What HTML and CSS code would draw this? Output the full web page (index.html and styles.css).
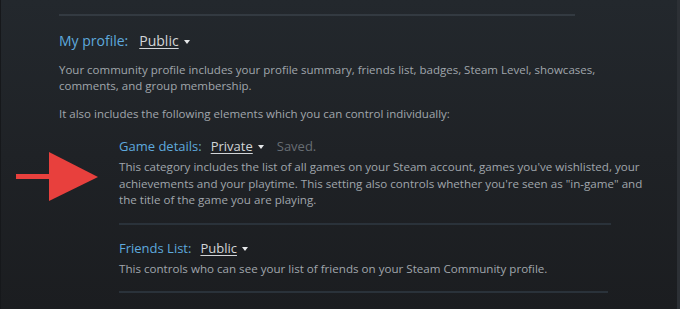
FILE: index.html
```html
<!DOCTYPE html>
<html>
<head>
<meta charset="utf-8">
<link rel="stylesheet" href="styles.css">
</head>
<body>
<div class="page">
  <div class="rule top-rule"></div>
  <section class="profile">
    <h2 class="setting-title big"><span class="label">My profile:</span><span class="value">Public</span><span class="caret"></span></h2>
    <p class="desc first">Your community profile includes your profile summary, friends list, badges, Steam Level, showcases, comments, and group membership.</p>
    <p class="desc second">It also includes the following elements which you can control individually:</p>
    <div class="sub">
      <div class="item">
        <h3 class="setting-title"><span class="label">Game details:</span><span class="value">Private</span><span class="caret"></span><span class="saved">Saved.</span></h3>
        <p class="desc small">This category includes the list of all games on your Steam account, games you've wishlisted, your achievements and your playtime. This setting also controls whether you're seen as "in&#8209;game" and the title of the game you are playing.</p>
      </div>
      <div class="rule sub-rule"></div>
      <div class="item">
        <h3 class="setting-title"><span class="label">Friends List:</span><span class="value">Public</span><span class="caret"></span></h3>
        <p class="desc small">This controls who can see your list of friends on your Steam Community profile.</p>
      </div>
      <div class="rule sub-rule last"></div>
    </div>
  </section>
  <svg class="arrow" width="90" height="52" viewBox="0 0 90 52">
    <rect x="0" y="23" width="36" height="5" fill="#e8403d"/>
    <polygon points="33,1 82,26 33,50" fill="#e8403d"/>
  </svg>
</div>
</body>
</html>
```
FILE: styles.css
```css
* { box-sizing: border-box; }
html, body { margin: 0; padding: 0; }
body {
  width: 680px;
  height: 309px;
  overflow: hidden;
  font-family: "Open Sans", "Noto Sans", sans-serif;
  background: linear-gradient(180deg, #23282d 0%, #1f2226 50%, #1b1d20 100%);
}
.page {
  position: relative;
  height: 309px;
  padding: 14px 0 0 58px;
  border-left: 1px solid #16181b;
  border-right: 3px solid #2c3035;
}
.rule { height: 2px; background: #333a41; }
.top-rule { width: 516px; }
.profile { padding-top: 15px; }
.setting-title {
  margin: 0;
  font-weight: normal;
  font-size: 13px;
  line-height: 18px;
  display: flex;
  align-items: center;
}
.setting-title.big { font-size: 14px; line-height: 20px; }
.label { color: #5ea9dd; margin-right: 9px; }
.big .label { margin-right: 11px; }
.value { color: #d2d5d8; text-decoration: underline; text-underline-offset: 2px; text-decoration-thickness: 1px; }
.caret {
  width: 0; height: 0;
  border-left: 3.5px solid transparent;
  border-right: 3.5px solid transparent;
  border-top: 4px solid #e6e8ea;
  margin-left: 5px;
  margin-top: 2px;
}
.saved { color: #676d73; margin-left: 13px; }
.desc {
  margin: 0;
  color: #a0a6ac;
  font-size: 11.5px;
  line-height: 16px;
  width: 560px;
}
.desc.first { margin-top: 11px; }
.desc.second { margin-top: 12px; }
.sub { padding-left: 60px; margin-top: 15px; }
.desc.small { margin-top: 4px; width: 532px; font-size: 11.6px; line-height: 16.5px; }
.item { padding-bottom: 14px; }
.sub-rule { width: 492px; height: 2px; background: #2a323a; margin-bottom: 14px; }
.sub-rule.last { width: 489px; }
.arrow { position: absolute; left: 15px; top: 151px; }
```
